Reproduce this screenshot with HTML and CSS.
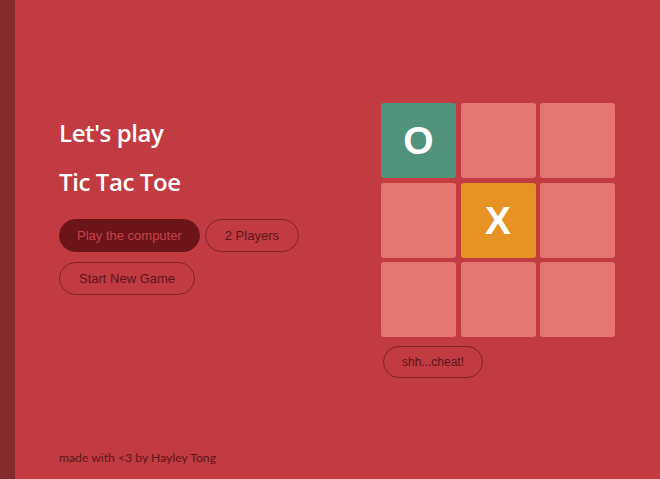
FILE: index.html
```html
<!DOCTYPE html>
<html>
<head>
<meta charset="utf-8">
<link rel="stylesheet" href="styles.css">
</head>
<body>
<div class="app">
  <aside class="sidebar"></aside>
  <main class="main">
    <div class="content">
      <section class="intro">
        <h1 class="title">Let's play</h1>
        <h1 class="title">Tic Tac Toe</h1>
        <div class="buttons">
          <div class="btn-row">
            <button class="btn btn-active">Play the computer</button>
            <button class="btn">2 Players</button>
          </div>
          <div class="btn-row">
            <button class="btn">Start New Game</button>
          </div>
        </div>
      </section>
      <section class="game">
        <div class="board">
          <div class="cell cell-o">O</div>
          <div class="cell"></div>
          <div class="cell"></div>
          <div class="cell"></div>
          <div class="cell cell-x">X</div>
          <div class="cell"></div>
          <div class="cell"></div>
          <div class="cell"></div>
          <div class="cell"></div>
        </div>
        <button class="btn btn-small">shh...cheat!</button>
      </section>
    </div>
    <footer class="footer">made with &lt;3 by Hayley Tong</footer>
  </main>
</div>
</body>
</html>
```
FILE: styles.css
```css
* { box-sizing: border-box; }
html, body { margin: 0; padding: 0; }
body {
  width: 660px;
  height: 479px;
  background: #c13b41;
  overflow: hidden;
}
.app {
  display: flex;
  height: 479px;
}
.sidebar {
  width: 15px;
  background: #832a2f;
  flex: none;
}
.main {
  flex: 1;
  display: flex;
  flex-direction: column;
  padding-left: 44px;
}
.content {
  display: flex;
  align-items: flex-start;
}
.intro {
  width: 322px;
  padding-top: 118px;
}
.title {
  margin: 0 0 20px;
  font-family: "Open Sans", Lato, sans-serif;
  font-weight: 600;
  font-size: 24px;
  line-height: 29px;
  color: #ffffff;
  letter-spacing: -0.4px;
}
.title + .title { margin-bottom: 23px; }
.buttons {
  display: flex;
  flex-direction: column;
  gap: 10px;
}
.btn-row {
  display: flex;
  gap: 5px;
}
.btn {
  font-family: "Liberation Sans", Arial, sans-serif;
  font-size: 13px;
  line-height: 15px;
  padding: 8px 19px;
  border: 1px solid #7e2227;
  border-radius: 20px;
  background: transparent;
  color: #5e1519;
  cursor: pointer;
}
.btn-active {
  padding: 8px 17px;
  background: #6b151a;
  border-color: #6b151a;
  color: #c8424a;
}
.game {
  padding-top: 103px;
  display: flex;
  flex-direction: column;
  align-items: flex-start;
  gap: 9px;
}
.board {
  display: grid;
  grid-template-columns: repeat(3, 75px);
  grid-template-rows: repeat(3, 75px);
  gap: 4.5px;
}
.cell {
  background: #e5766f;
  border-radius: 3px;
  display: flex;
  align-items: center;
  justify-content: center;
  font-family: "Liberation Sans", Arial, sans-serif;
  font-weight: 700;
  font-size: 39px;
  color: #ffffff;
}
.cell-o { background: #50927c; }
.cell-x { background: #e69224; padding-top: 2px; }
.btn-small {
  font-size: 12px;
  line-height: 14px;
  padding: 8px 18px;
  margin-left: 2px;
}
.footer {
  margin-top: auto;
  padding-bottom: 14px;
  font-family: Lato, "Open Sans", sans-serif;
  font-size: 12.2px;
  line-height: 15px;
  color: #5e1519;
}
```
